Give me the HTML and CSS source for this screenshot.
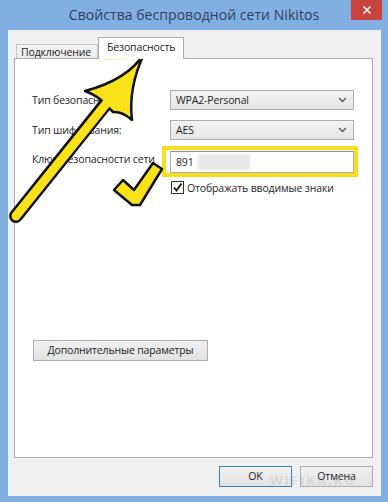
FILE: index.html
```html
<!DOCTYPE html>
<html lang="ru">
<head>
    <meta charset="UTF-8">
    <meta name="viewport" content="width=device-width, initial-scale=1.0">
    <title>Свойства беспроводной сети Nikitos</title>
    <link rel="stylesheet" href="styles.css">
</head>
<body>
    <div class="window">
        <div class="titlebar">
            <div class="title">Свойства беспроводной сети Nikitos</div>
            <div class="close">
                <svg width="10" height="10" viewBox="0 0 10 10">
                    <path d="M1.5 1.5 L8.5 8.5 M8.5 1.5 L1.5 8.5" stroke="#fff" stroke-width="1.6" fill="none"/>
                </svg>
            </div>
        </div>

        <div class="client">
            <div class="tabs">
                <div class="tab">Подключение</div>
                <div class="tab active">Безопасность</div>
            </div>

            <div class="panel">
                <div class="form">
                    <div class="label">Тип безопасности:</div>
                    <div class="select">
                        <span>WPA2-Personal</span>
                        <svg class="chevron" width="9" height="6" viewBox="0 0 9 6">
                            <path d="M1 1 L4.5 4.5 L8 1" stroke="#555" stroke-width="1.3" fill="none"/>
                        </svg>
                    </div>

                    <div class="label">Тип шифрования:</div>
                    <div class="select">
                        <span>AES</span>
                        <svg class="chevron" width="9" height="6" viewBox="0 0 9 6">
                            <path d="M1 1 L4.5 4.5 L8 1" stroke="#555" stroke-width="1.3" fill="none"/>
                        </svg>
                    </div>

                    <div class="label">Ключ безопасности сети</div>
                    <div class="highlight">
                        <div class="input">891<span class="blur"></span></div>
                    </div>

                    <div></div>
                    <label class="check">
                        <span class="box">
                            <svg width="11" height="11" viewBox="0 0 11 11">
                                <path d="M2 5.5 L4.5 8.5 L9.5 1.5" stroke="#111" stroke-width="1.8" fill="none"/>
                            </svg>
                        </span>
                        Отображать вводимые знаки
                    </label>
                </div>

                <div class="button advanced">Дополнительные параметры</div>
            </div>

            <div class="footer">
                <div class="button default">OK</div>
                <div class="button">Отмена</div>
            </div>
        </div>

        <div class="watermark">WIFIKA.RU</div>

        <!-- пометки поверх окна -->
        <svg class="marks" width="388" height="502" viewBox="0 0 388 502">
            <path d="M103 58 L183 57" stroke="#f5dd12" stroke-width="3" stroke-linecap="round"/>
            <path d="M16 216 L108 101" stroke="#111" stroke-width="14" stroke-linecap="round"/>
            <path d="M144 54 Q127 80 85 91 Q98 96 104 103 L113 112 Q122 111 132 120 Q128 88 144 54 Z"
                  fill="#f8e31a" stroke="#111" stroke-width="2.5" stroke-linejoin="round"/>
            <path d="M16 216 L110 99" stroke="#f8e31a" stroke-width="9" stroke-linecap="round"/>
            <path d="M114 190 L123 180 L134 190 L153 163 L162 169 L140 205 L132 205 Z"
                  fill="#f8e31a" stroke="#111" stroke-width="2.5" stroke-linejoin="round"/>
        </svg>
    </div>
</body>
</html>
```

FILE: styles.css
```css
body {
    margin: 0;
    font-family: 'Open Sans', 'Noto Sans', sans-serif;
    font-size: 10.5px;
    letter-spacing: -0.15px;
    color: #1e1e1e;
}
.window {
    width: 388px;
    height: 502px;
    background: #82afe1;
    position: relative;
    overflow: hidden;
    display: flex;
    flex-direction: column;
}
.titlebar {
    height: 30px;
    display: grid;
    grid-template-columns: 1fr auto 1fr;
}
.title {
    grid-column: 2;
    font-size: 14px;
    letter-spacing: 0.05px;
    color: #2c415d;
    line-height: 30px;
}
.close {
    grid-column: 3;
    justify-self: end;
    align-self: start;
    width: 31px;
    height: 20px;
    margin-right: 6px;
    background: #c8443c;
    display: flex;
    justify-content: center;
    align-items: center;
}
.client {
    flex: 1;
    margin: 0 7px 6px 8px;
    background: #f0f0f0;
    display: flex;
    flex-direction: column;
}
.tabs {
    display: flex;
    align-items: flex-end;
    padding: 7px 0 0 8px;
    position: relative;
    z-index: 1;
}
.tab {
    height: 13px;
    padding: 0 4px;
    line-height: 15px;
    border: 1px solid #c5c5c5;
    border-bottom: none;
    background: linear-gradient(#f4f4f4, #ececec);
    width: 72px;
}
.tab.active {
    height: 21px;
    width: 76px;
    line-height: 19px;
    margin-bottom: -1px;
    border-color: #adadad;
    background: #fff;
    padding: 0 4px 0 8px;
    width: 72px;
}
.panel {
    flex: 1;
    margin: 0 8px 0 6px;
    background: #fff;
    border: 1px solid #adadad;
    padding: 31px 0 0 17px;
    display: flex;
    flex-direction: column;
}
.form {
    display: grid;
    grid-template-columns: 138px 184px;
    grid-template-rows: 20px 20px 22px 12px;
    row-gap: 10px;
    align-items: center;
}
.form > :nth-child(5),
.form > :nth-child(6) {
    margin-top: -4px;
}
.form > :nth-child(7),
.form > :nth-child(8) {
    margin-top: -1px;
}
.select {
    height: 18px;
    border: 1px solid #acacac;
    background: linear-gradient(#f3f3f3, #e6e6e6);
    display: flex;
    justify-content: space-between;
    align-items: center;
    padding: 0 5px;
}
.chevron {
    margin-right: 1px;
}
.highlight {
    margin: -5px -4px -4px -8px;
    border: 4px solid #f6e01c;
    padding: 1px 0 0 4px;
}
.input {
    height: 20px;
    border: 1px solid #abadb3;
    border-top-color: #8c8f94;
    background: #fff;
    line-height: 20px;
    padding-left: 5px;
    display: flex;
    align-items: center;
}
.blur {
    display: inline-block;
    width: 52px;
    height: 16px;
    margin-left: 4px;
    background: #e8e8e8;
    filter: blur(1px);
}
.check {
    display: flex;
    align-items: center;
    gap: 3px;
    margin-left: 1px;
    white-space: nowrap;
}
.box {
    width: 11px;
    height: 11px;
    border: 1px solid #333;
    background: #fff;
    display: flex;
}
.button {
    height: 19px;
    border: 1px solid #acacac;
    background: linear-gradient(#f0f0f0, #e3e3e3);
    text-align: center;
    line-height: 19px;
}
.advanced {
    width: 173px;
    margin: 146px 0 0 1px;
}
.footer {
    display: flex;
    justify-content: flex-end;
    gap: 8px;
    padding: 8px 8px 9px 0;
}
.footer .button {
    width: 71px;
}
.footer .default {
    border-color: #3c7fb1;
}
.watermark {
    position: absolute;
    left: 270px;
    top: 471px;
    font-size: 13px;
    font-weight: bold;
    letter-spacing: 2px;
    color: rgba(160, 160, 160, 0.22);
}
.marks {
    position: absolute;
    left: 0;
    top: 0;
    pointer-events: none;
}
```
